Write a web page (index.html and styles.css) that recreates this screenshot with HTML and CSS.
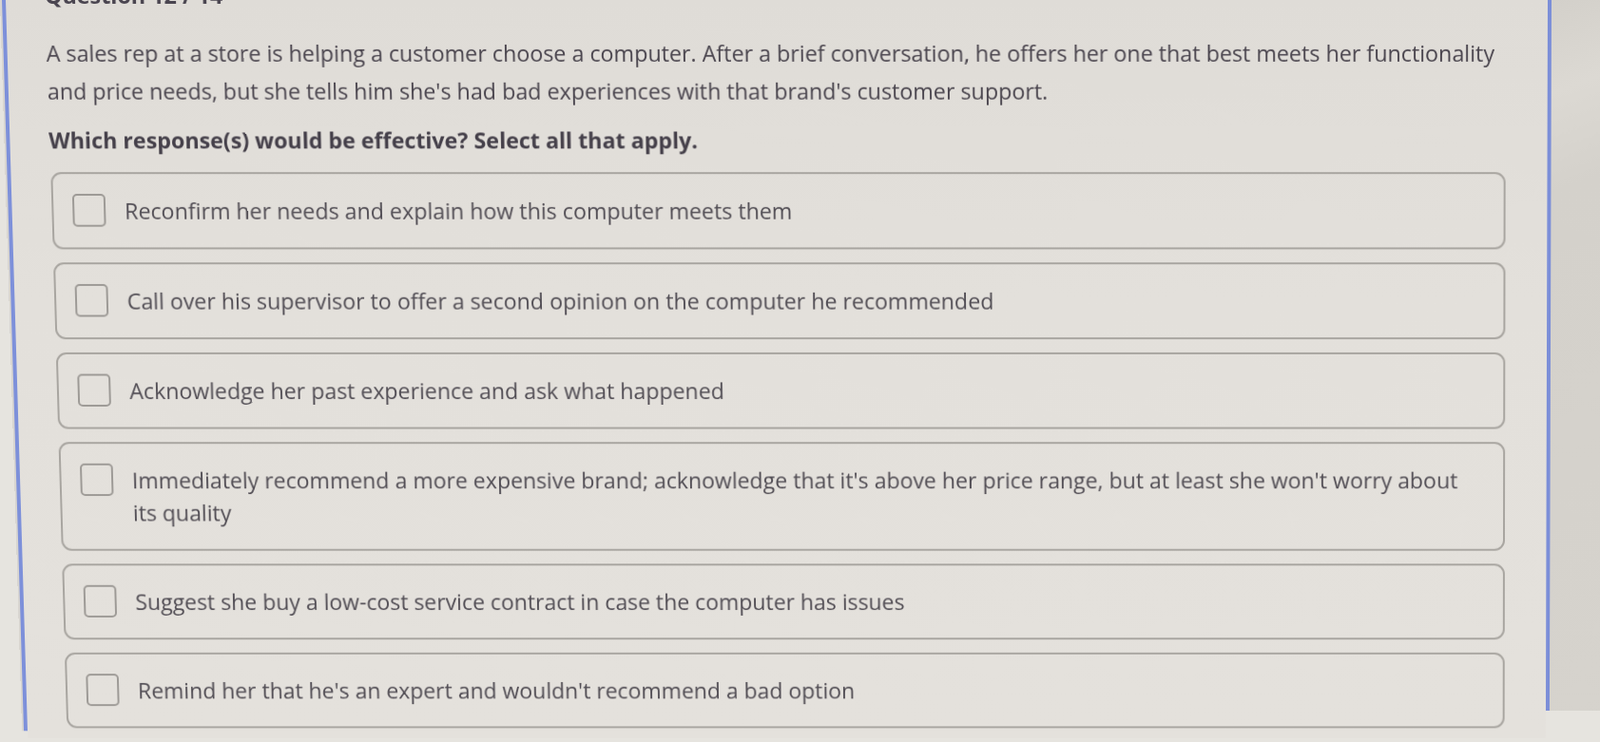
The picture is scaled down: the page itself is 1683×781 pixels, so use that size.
FILE: index.html
```html
<!DOCTYPE html>
<html lang="en">
<head>
<meta charset="utf-8">
<title>Question 12 / 14</title>
<link rel="stylesheet" href="styles.css">
</head>
<body>
<div class="screen">
  <div class="edge-left"></div>
  <main class="main">
    <h2 class="qnum">Question 12 / 14</h2>
    <p class="stem">A sales rep at a store is helping a customer choose a computer. After a brief conversation, he offers her one that best meets her functionality<br>and price needs, but she tells him she's had bad experiences with that brand's customer support.</p>
    <p class="prompt">Which response(s) would be effective? Select all that apply.</p>
    <ul class="options">
      <li class="option"><span class="check"></span><span class="label">Reconfirm her needs and explain how this computer meets them</span></li>
      <li class="option"><span class="check"></span><span class="label">Call over his supervisor to offer a second opinion on the computer he recommended</span></li>
      <li class="option"><span class="check"></span><span class="label">Acknowledge her past experience and ask what happened</span></li>
      <li class="option"><span class="check"></span><span class="label">Immediately recommend a more expensive brand; acknowledge that it's above her price range, but at least she won't worry about<br>its quality</span></li>
      <li class="option"><span class="check"></span><span class="label">Suggest she buy a low-cost service contract in case the computer has issues</span></li>
      <li class="option"><span class="check"></span><span class="label">Remind her that he's an expert and wouldn't recommend a bad option</span></li>
    </ul>
  </main>
  <div class="edge-right"></div>
</div>
</body>
</html>
```

FILE: styles.css
```css
html, body {
  margin: 0;
  padding: 0;
}
body {
  width: 1683px;
  height: 781px;
  overflow: hidden;
  background: #e6e4df;
  font-family: "Open Sans", "Noto Sans", sans-serif;
}
.screen {
  display: flex;
  align-items: flex-start;
  width: 1780px;
  transform-origin: 841px 0;
  transform: perspective(2000px) rotateX(-2.3deg) skewX(0.75deg);
}
.edge-left {
  flex: none;
  width: 2px;
  height: 782px;
  background: #d8d5d0;
  border-right: 4px solid #7d90da;
}
.main {
  flex: none;
  width: 1622px;
  box-sizing: border-box;
  padding: 0 44px 0 41px;
  background: linear-gradient(180deg, #dfdcd7 0%, #e3e0db 40%, #e4e1dc 100%);
  height: 790px;
}
.edge-right {
  flex: none;
  width: 150px;
  height: 760px;
  border-left: 4px solid #7b8ed8;
  background: linear-gradient(160deg, #d3d0ca 0%, #dcd9d3 12%, #d4d1cb 25%, #d6d3cd 100%);
}
.qnum {
  margin: -20px 0 0 0;
  font-size: 23.3px;
  line-height: 30px;
  font-weight: 700;
  color: #4a4550;
}
.stem {
  margin: 26px 0 0 0;
  font-size: 23.3px;
  line-height: 40px;
  color: #4a454e;
  white-space: nowrap;
}
.prompt {
  margin: 16px 0 0 0;
  font-size: 23.3px;
  line-height: 32px;
  font-weight: 700;
  color: #45404a;
}
.options {
  list-style: none;
  margin: 18px 0 0 1px;
  padding: 0;
  display: flex;
  flex-direction: column;
  gap: 14px;
}
.option {
  display: flex;
  align-items: flex-start;
  gap: 20px;
  padding: 21.5px 20px;
  border: 2px solid #a8a5a0;
  border-radius: 11px;
  background: transparent;
}
.check {
  flex: none;
  width: 31px;
  height: 31px;
  margin-top: -1px;
  border: 2px solid #9d9a96;
  border-radius: 5px;
}
.label {
  font-size: 23.3px;
  line-height: 35px;
  color: #524e55;
  white-space: nowrap;
}
```
